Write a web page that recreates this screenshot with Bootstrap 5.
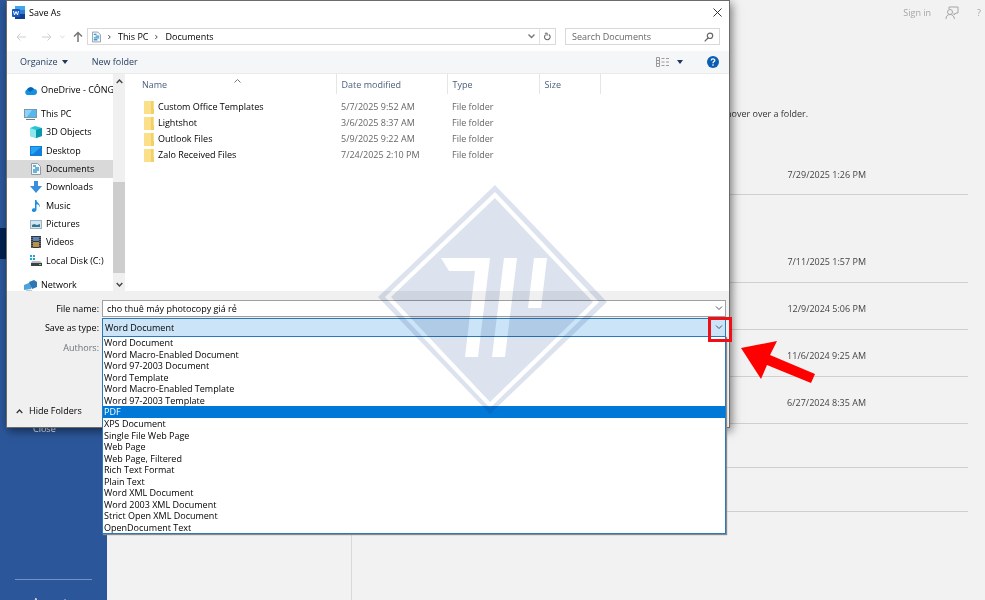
<!DOCTYPE html>
<html lang="en">
<head>
<meta charset="utf-8">
<meta name="viewport" content="width=device-width, initial-scale=1">
<title>Save As</title>
<link href="https://cdn.jsdelivr.net/npm/bootstrap@5.3.0/dist/css/bootstrap.min.css" rel="stylesheet">
<style>
  body { font-family: "Open Sans", "Noto Sans", sans-serif; font-size: 9px; line-height: 12px; color: #000; background: #f2f2f2; }
  button, input, select { font: inherit; color: inherit; }
  svg { display: block; flex: none; }
  a { color: inherit; text-decoration: none; }
  .plain { border: 0; background: none; padding: 0; }

  /* application behind the dialog */
  .rail { width: 107px; background: #2b579a; color: #fff; font-size: 9px; }
  .rail-current { height: 31px; margin-top: 228px; background: #002050; }
  .rail-close { margin-top: 164px; padding-left: 33px; }
  .rail-foot { margin: 0 15px; border-top: 1px solid #6f93c8; padding: 16px 18px 0; height: 21px; }
  .places { width: 245px; border-right: 1px solid #d8d8d8; }
  .top-tools { height: 26px; color: #a6a6a6; gap: 14px; padding-right: 4px; }
  .hint { margin-top: 82px; padding-left: 374px; color: #333; }
  .recent { margin-top: 35px; color: #444; padding-right: 17px; padding-left: 20px; }
  .recent li { border-bottom: 1px solid #cfcfcf; height: 47px; padding-right: 102px; padding-top: 6px; }
  .recent li.before-group { margin-bottom: 41px; height: 40px; padding-top: 0; }
  .recent li.blank { height: 44px; }

  /* dialog window */
  .window { left: 6px; top: 0; width: 724px; background: #fff; border: 1px solid #6b6b6b; box-shadow: 2px 3px 9px rgba(0,0,0,.5); }
  .title-row { height: 23px; padding: 0 7px 0 5px; gap: 4px; }
  .nav-row { height: 27px; padding: 4px 9px 6px 9px; color: #555; }
  .field { border: 1px solid #d9d9d9; background: #fff; height: 17px; }
  .crumbs { gap: 7px; color: #000; }
  .search { width: 155px; margin-left: 9px; padding: 0 5px 0 6px; }
  .search input { border: 0; outline: 0; padding: 0; width: 100px; background: none; }
  .search input::placeholder { color: #666; opacity: 1; }
  .tool-row { height: 23px; background: #f5f6f7; border-bottom: 1px solid #e8eaec; color: #1e395b; padding: 0 10px 0 13px; }
  .caret { border: 3px solid transparent; border-top: 4px solid #1e395b; border-bottom: 0; }
  .browse { height: 217px; }
  .tree { width: 106px; padding-top: 7px; }
  .tree a { gap: 4px; padding-left: 23px; min-height: 18px; }
  .tree a.top { padding-left: 17px; }
  .tree a.chosen { background: #d9d9d9; }
  .tree-pc { height: 165px; margin: 6px 0; }
  .scroller { width: 12px; background: #f0f0f0; padding: 5px 0 4px; color: #444; }
  .thumb { background: #cdcdcd; height: 91px; margin-top: 98px; margin-bottom: 9px; }
  .files { margin-left: 17px; width: 458px; table-layout: fixed; }
  .files th { font-weight: 400; color: #4c607a; height: 20px; padding: 1px 0 0 5px; border-right: 1px solid #e5e5e5; }
  .files th:first-child, .files td:first-child { padding-left: 0; }
  .name-head { gap: 67px; }
  .files td { height: 16px; padding: 0 0 0 5px; color: #666; }
  .files td:first-child { color: #000; padding-left: 1px; }
  .files tbody::before { content: ""; display: block; height: 5px; }
  .form-area { background: #f0f0f0; height: 136px; padding: 9px 3px 0 0; }
  .form-area label { width: 92px; text-align: right; }
  .form-grid { display: grid; grid-template-columns: 92px 1fr; column-gap: 3px; row-gap: 1px; align-items: center; }
  .name-box { border: 1px solid #a0a0a0; background: #fff; height: 17px; padding-right: 2px; }
  .name-box input { border: 0; outline: 0; background: none; padding: 0 0 0 4px; }
  .type-box { position: relative; border: 1px solid #2a7ab9; background: #cce4f7; height: 19px; padding-right: 2px; }
  .type-box select { appearance: none; border: 0; outline: 0; background: none; padding: 0 0 0 2px; }
  .options { position: absolute; left: -1px; right: -1px; top: 17px; height: 198px; background: #fff; border: 1px solid #2a7ab9; box-shadow: 1px 1px 1px #8a8a8a; z-index: 2; }
  .options button { flex: 1 1 0; text-align: left; padding-left: 1px; line-height: 11px; min-height: 0; }
  .options button.active { background: #0078d7; color: #fff; }
  .hide { margin-top: 51px; gap: 6px; margin-left: 9px; }

  /* marks lying over the windows */
  .mark-logo { left: 378px; top: 185px; mix-blend-mode: multiply; pointer-events: none; z-index: 5; }
  .mark-box { left: 708px; top: 317px; width: 24px; height: 25px; border: 3px solid #ee0f17; z-index: 6; pointer-events: none; }
  .mark-arrow { left: 740px; top: 341px; z-index: 6; }
</style>
</head>
<body class="position-relative vh-100 overflow-hidden">
<div class="d-flex h-100">
  <nav class="rail d-flex flex-column flex-shrink-0">
    <div class="rail-current"></div>
    <a class="rail-close" href="#">Close</a>
    <div class="rail-foot mt-auto overflow-hidden"><a href="#">Account</a></div>
  </nav>
  <div class="places flex-shrink-0"></div>
  <main class="flex-grow-1">
    <div class="top-tools d-flex align-items-center justify-content-end">
      <a href="#">Sign in</a>
      <svg width="14" height="14" viewBox="0 0 14 14" fill="none" stroke="#a6a6a6"><path d="M4 3V1h9v6h-2l-2 2V7"/><circle cx="5" cy="6" r="2.500"/><path d="M1 13c0-3 1.500-4.500 4-4.500S9 10 9.500 13"/></svg>
      <a class="ms-1" href="#">?</a>
    </div>
    <p class="hint mb-0">hover over a folder.</p>
    <ul class="recent list-unstyled mb-0">
      <li class="before-group d-flex align-items-center justify-content-end">7/29/2025 1:26 PM</li>
      <li class="d-flex align-items-center justify-content-end">7/11/2025 1:57 PM</li>
      <li class="d-flex align-items-center justify-content-end">12/9/2024 5:06 PM</li>
      <li class="d-flex align-items-center justify-content-end">11/6/2024 9:25 AM</li>
      <li class="d-flex align-items-center justify-content-end">6/27/2024 8:35 AM</li>
      <li class="blank"></li>
      <li class="blank"></li>
    </ul>
  </main>
</div>

<section class="window position-absolute" role="dialog" aria-label="Save As">
  <header class="title-row d-flex align-items-center">
    <svg width="13" height="13" viewBox="0 0 13 13"><rect x="3" width="10" height="13" rx="1" fill="#2b7cd3"/><path d="M3 0h10v4H3z" fill="#41a5ee"/><path d="M3 8h10v5H3z" fill="#103f91"/><rect y="3" width="8" height="8" rx="1" fill="#185abd"/><path d="M1.500 5l1 4L4 5.500 5.500 9l1-4" stroke="#fff" fill="none"/></svg>
    <span>Save As</span>
    <button class="plain ms-auto" aria-label="Close window"><svg width="9" height="9" viewBox="0 0 9 9" stroke="#333"><path d="M.5.5l8 8M8.500.5l-8 8"/></svg></button>
  </header>
  <div class="nav-row d-flex align-items-center">
    <button class="plain" aria-label="Back"><svg width="10" height="10" viewBox="0 0 10 10" fill="none" stroke="#cfcfcf"><path d="M10 5H1M4.500 1.500L1 5l3.500 3.500"/></svg></button>
    <button class="plain ms-3 me-1" aria-label="Forward"><svg width="10" height="10" viewBox="0 0 10 10" fill="none" stroke="#cfcfcf"><path d="M0 5h9M5.500 1.500L9 5 5.500 8.500"/></svg></button>
    <button class="plain ms-1" aria-label="Recent"><svg width="5" height="4" viewBox="0 0 6 4" fill="none" stroke="#cfcfcf"><path d="M.5.5L3 3 5.500.5"/></svg></button>
    <button class="plain ms-2" aria-label="Up"><svg width="10" height="11" viewBox="0 0 10 11" fill="none" stroke="#777" stroke-width="1.500"><path d="M5 11V1.500M1 5.500l4-4 4 4"/></svg></button>
    <div class="field d-flex align-items-center flex-grow-1 ms-1">
      <div class="crumbs d-flex align-items-center ps-1">
        <svg width="9" height="12" viewBox="0 0 10 12"><path d="M.5.5h6l3 3v8h-9z" fill="#f4f8fa" stroke="#8e9aa3"/><path d="M2 3h3M4 5h4M2 7h6M2 9h4" stroke="#3c9ad0" stroke-width="1.500"/></svg>
        <svg width="3" height="6" viewBox="0 0 4 6" fill="none" stroke="#444" stroke-width="1.300"><path d="M.5.500L3 3 .5 5.500"/></svg>
        <a href="#">This PC</a>
        <svg width="3" height="6" viewBox="0 0 4 6" fill="none" stroke="#444" stroke-width="1.300"><path d="M.5.500L3 3 .5 5.500"/></svg>
        <a href="#">Documents</a>
      </div>
      <button class="plain ms-auto me-1" aria-label="Previous locations"><svg width="7" height="5" viewBox="0 0 7 5" fill="none" stroke="#777" stroke-width="1.400"><path d="M.5.500l3 3 3-3"/></svg></button>
      <button class="plain border-start h-100 px-1" aria-label="Refresh"><svg width="7" height="9" viewBox="0 0 8 9" fill="none" stroke="#666" stroke-width="1.200"><path d="M5.500 2.200A3.200 3.200 0 1 1 2 2.300M1 .800h2.500V3.500"/></svg></button>
    </div>
    <div class="field search d-flex align-items-center justify-content-between">
      <input type="search" placeholder="Search Documents" aria-label="Search Documents">
      <svg width="10" height="10" viewBox="0 0 10 10" fill="none" stroke="#666" stroke-width="1.200"><circle cx="6" cy="3.800" r="2.700"/><path d="M4 6L.7 9.300"/></svg>
    </div>
  </div>
  <div class="tool-row d-flex align-items-center">
    <button class="plain d-flex align-items-center gap-1">Organize <span class="caret"></span></button>
    <button class="plain ms-4">New folder</button>
    <button class="plain ms-auto d-flex align-items-center gap-2" aria-label="Change view"><svg width="13" height="10" viewBox="0 0 13 10" fill="none" stroke="#9a9a9a"><path d="M.5.500h3v9h-3zM.5 3.500h3M.5 6.500h3M5.500 1.500h3M5.500 5h3M5.500 8.500h3M10 1.500h3M10 5h3M10 8.500h3"/></svg><span class="caret"></span></button>
    <button class="plain ms-4" aria-label="Help"><svg width="12" height="12" viewBox="0 0 12 12"><circle cx="6" cy="6" r="6" fill="#0a5fb4"/><path d="M4.200 4.500C4.200 2.200 7.800 2.300 7.800 4.300 7.800 5.700 6 5.500 6 7.200M6 8.300v1.400" stroke="#fff" stroke-width="1.300" fill="none"/></svg></button>
  </div>
  <div class="browse d-flex overflow-hidden">
    <nav class="tree flex-shrink-0 overflow-hidden text-nowrap">
      <a class="top d-flex align-items-center" href="#"><svg width="13" height="9" viewBox="0 0 13 9"><path d="M3 9a3 3 0 0 1 0-5.500A4 4 0 0 1 10 3a3 3 0 0 1 0 6z" fill="#1490df"/><path d="M3 3.500A4 4 0 0 1 10 3L6 6z" fill="#0364b8"/></svg>OneDrive - CÔNG</a>
      <div class="tree-pc d-flex flex-column">
        <a class="top d-flex align-items-center flex-fill" href="#"><svg width="13" height="11" viewBox="0 0 13 11"><rect x=".5" y=".5" width="12" height="8" fill="#54b7ef" stroke="#7d98aa"/><path d="M1 1h7L3 8H1z" fill="#8ad3fa"/><path d="M2 10.500h9" stroke="#6c7d88"/></svg>This PC</a>
        <a class="d-flex align-items-center flex-fill" href="#"><svg width="12" height="12" viewBox="0 0 12 12"><path d="M0 2l5-2 7 2v8l-6 2-6-2z" fill="#27c5d3"/><path d="M0 2l6 2v8l-6-2z" fill="#8ee7ee"/><path d="M6 4l6-2v8l-6 2z" fill="#0897ac"/></svg>3D Objects</a>
        <a class="d-flex align-items-center flex-fill" href="#"><svg width="12" height="10" viewBox="0 0 12 10"><rect width="12" height="10" fill="#0f7fd8"/><path d="M1 1h10L3 8H1z" fill="#27a3f5"/></svg>Desktop</a>
        <a class="chosen d-flex align-items-center flex-fill" href="#"><svg width="12" height="12" viewBox="0 0 12 12"><path d="M1.500.5h6l3 3v8h-9z" fill="#f4f8fa" stroke="#8e9aa3"/><path d="M3 3h3M5 5h4M3 7h6M3 9h4" stroke="#3c9ad0" stroke-width="1.500"/></svg>Documents</a>
        <a class="d-flex align-items-center flex-fill" href="#"><svg width="12" height="12" viewBox="0 0 12 12"><path d="M4 0h4v5h4l-6 7-6-7h4z" fill="#3a8fdd"/></svg>Downloads</a>
        <a class="d-flex align-items-center flex-fill" href="#"><svg width="12" height="12" viewBox="0 0 12 12"><path d="M5 0h1.500c0 3 4.500 3.500 3 7.500 0-2-1-3-3-3.200V9.500C6.500 13 1 12.500 2 9.500c.4-1 2-1.500 3-1z" fill="#1b8de0"/></svg>Music</a>
        <a class="d-flex align-items-center flex-fill" href="#"><svg width="12" height="9" viewBox="0 0 12 9"><rect x=".5" y=".5" width="11" height="8" fill="#cfe8f7" stroke="#a5b1b9"/><path d="M2 7V5l2-1 3 1 3-1v3z" fill="#37748e"/></svg>Pictures</a>
        <a class="d-flex align-items-center flex-fill" href="#"><svg width="12" height="12" viewBox="0 0 12 12"><path d="M1 0h10v12H1z" fill="#33373c"/><path d="M3 1h6v4H3z" fill="#5d83bd"/><path d="M3 6h6v5H3z" fill="#b49349"/><path d="M2 1v11M10 1v11" stroke="#999" stroke-dasharray="1 1"/></svg>Videos</a>
        <a class="d-flex align-items-center flex-fill" href="#"><svg width="12" height="11" viewBox="0 0 12 11"><path d="M0 0h2v2H0zM3 0h2v2H3zM0 3h2v2H0zM3 3h2v2H3z" fill="#16a5e5"/><path d="M2 6h8l2 2H1z" fill="#b8bec2"/><path d="M1 8h11v3H1z" fill="#3b4146"/><path d="M9 9.500h2" stroke="#6ce05c"/></svg>Local Disk (C:)</a>
      </div>
      <a class="top d-flex align-items-center" href="#"><svg width="13" height="11" viewBox="0 0 13 11"><path d="M0 5l7-3v7l-7 1z" fill="#4fa3dc"/><path d="M5 2l5-2 3 2v5l-5 2z" fill="#2c78b5"/><path d="M2 11h6" stroke="#7592a5"/></svg>Network</a>
    </nav>
    <div class="scroller d-flex flex-column align-items-stretch flex-shrink-0">
      <svg class="mx-auto" width="7" height="5" viewBox="0 0 7 5" fill="none" stroke="#444" stroke-width="1.400"><path d="M.7 4l2.800-3 2.800 3"/></svg>
      <div class="thumb"></div>
      <svg class="mx-auto" width="7" height="5" viewBox="0 0 7 5" fill="none" stroke="#444" stroke-width="1.400"><path d="M.7 1l2.800 3 2.800-3"/></svg>
    </div>
    <div>
      <table class="files">
        <colgroup><col style="width:194px"><col style="width:111px"><col style="width:92px"><col style="width:61px"></colgroup>
        <thead><tr>
          <th><div class="name-head d-flex align-items-start"><span>Name</span><svg width="7" height="4" viewBox="0 0 7 4" fill="none" stroke="#777"><path d="M.5 3.500l3-3 3 3"/></svg></div></th>
          <th>Date modified</th><th>Type</th><th>Size</th>
        </tr></thead>
        <tbody>
          <tr><td><div class="d-flex align-items-center gap-1"><svg width="11" height="13" viewBox="0 0 11 13"><path d="M1 0h10v13H1z" fill="#fbe08a"/><path d="M8 0h2v8h1v5H8z" fill="#f3cf68"/></svg>Custom Office Templates</div></td><td>5/7/2025 9:52 AM</td><td>File folder</td><td></td></tr>
          <tr><td><div class="d-flex align-items-center gap-1"><svg width="11" height="13" viewBox="0 0 11 13"><path d="M1 0h10v13H1z" fill="#fbe08a"/><path d="M8 0h2v8h1v5H8z" fill="#f3cf68"/></svg>Lightshot</div></td><td>3/6/2025 8:37 AM</td><td>File folder</td><td></td></tr>
          <tr><td><div class="d-flex align-items-center gap-1"><svg width="11" height="13" viewBox="0 0 11 13"><path d="M1 0h10v13H1z" fill="#fbe08a"/><path d="M8 0h2v8h1v5H8z" fill="#f3cf68"/></svg>Outlook Files</div></td><td>5/9/2025 9:22 AM</td><td>File folder</td><td></td></tr>
          <tr><td><div class="d-flex align-items-center gap-1"><svg width="11" height="13" viewBox="0 0 11 13"><path d="M1 0h10v13H1z" fill="#fbe08a"/><path d="M8 0h2v8h1v5H8z" fill="#f3cf68"/></svg>Zalo Received Files</div></td><td>7/24/2025 2:10 PM</td><td>File folder</td><td></td></tr>
        </tbody>
      </table>
    </div>
  </div>
  <form class="form-area">
    <div class="form-grid">
      <label for="fname">File name:</label>
      <div class="name-box d-flex align-items-center">
        <input class="flex-grow-1" id="fname" type="text" value="cho thuê máy photocopy giá rẻ">
        <svg width="8" height="5" viewBox="0 0 8 5" fill="none" stroke="#555"><path d="M1 .5l3 3 3-3"/></svg>
      </div>
      <label for="ftype">Save as type:</label>
      <div class="type-box d-flex align-items-center">
        <select class="flex-grow-1" id="ftype"><option>Word Document</option></select>
        <svg width="8" height="5" viewBox="0 0 8 5" fill="none" stroke="#555"><path d="M1 .5l3 3 3-3"/></svg>
        <div class="options d-flex flex-column">
          <button type="button" class="plain">Word Document</button>
          <button type="button" class="plain">Word Macro-Enabled Document</button>
          <button type="button" class="plain">Word 97-2003 Document</button>
          <button type="button" class="plain">Word Template</button>
          <button type="button" class="plain">Word Macro-Enabled Template</button>
          <button type="button" class="plain">Word 97-2003 Template</button>
          <button type="button" class="plain active">PDF</button>
          <button type="button" class="plain">XPS Document</button>
          <button type="button" class="plain">Single File Web Page</button>
          <button type="button" class="plain">Web Page</button>
          <button type="button" class="plain">Web Page, Filtered</button>
          <button type="button" class="plain">Rich Text Format</button>
          <button type="button" class="plain">Plain Text</button>
          <button type="button" class="plain">Word XML Document</button>
          <button type="button" class="plain">Word 2003 XML Document</button>
          <button type="button" class="plain">Strict Open XML Document</button>
          <button type="button" class="plain">OpenDocument Text</button>
        </div>
      </div>
      <span class="text-end text-secondary mt-1">Authors:</span>
    </div>
    <button type="button" class="hide plain d-flex align-items-center"><svg width="7" height="5" viewBox="0 0 7 5" fill="none" stroke="#333" stroke-width="1.200"><path d="M.7 4l2.800-3 2.800 3"/></svg>Hide Folders</button>
  </form>
</section>

<svg class="mark-logo position-absolute" width="230" height="230" viewBox="0 0 230 230" aria-hidden="true">
  <path fill="#dce3ee" fill-rule="evenodd" d="M117 0L229 117 112 229 0 112zM117 7L7 112 112 223 221 117z"/>
  <path fill="#dce3ee" fill-rule="evenodd" d="M117 13L215 117 112 217 13 112zM63 73l8 13h26L87 172h13L112 73zM126 73L114 172h13L139 73zM156 73l-6 50h13l6-50z"/>
</svg>
<div class="mark-box position-absolute"></div>
<svg class="mark-arrow position-absolute" width="76" height="43" viewBox="0 0 76 43" aria-hidden="true"><path fill="#f00" d="M1 7L37 0 30 14 75 33 71 42 27 24 21 38z"/></svg>
</body>
</html>
